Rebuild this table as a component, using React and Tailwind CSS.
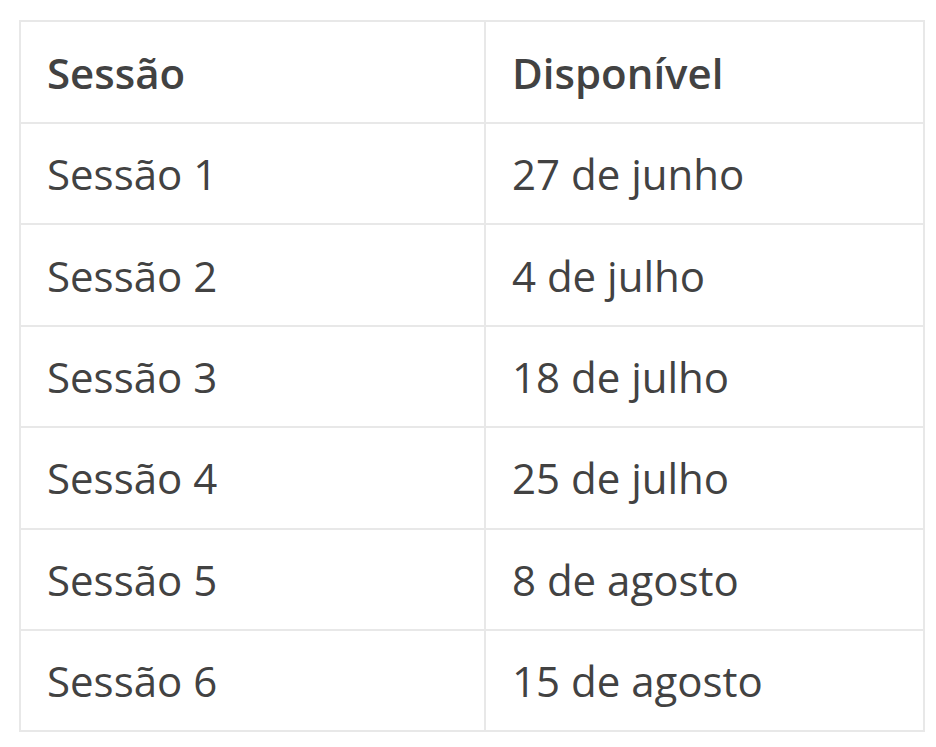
import React from "react";

const rows = [
  ["Sessão 1", "27 de junho"],
  ["Sessão 2", "4 de julho"],
  ["Sessão 3", "18 de julho"],
  ["Sessão 4", "25 de julho"],
  ["Sessão 5", "8 de agosto"],
  ["Sessão 6", "15 de agosto"],
];

const App = () => {
  return (
    <div
      className="min-h-screen bg-white pl-[19px] pt-[20px] text-[#424242]"
      style={{ fontFamily: '"Open Sans", "Liberation Sans", sans-serif' }}
    >
      <table className="w-[906px] table-fixed border-collapse border-2 border-[#e8e8e8] text-[42px]">
        <colgroup>
          <col className="w-[465px]" />
          <col />
        </colgroup>
        <thead>
          <tr className="h-[102px]">
            <th className="border-2 border-[#e8e8e8] px-[26px] text-left font-semibold">Sessão</th>
            <th className="border-2 border-[#e8e8e8] px-[26px] text-left font-semibold">Disponível</th>
          </tr>
        </thead>
        <tbody>
          {rows.map(([session, date]) => (
            <tr key={session} className="h-[101.4px]">
              <td className="border-2 border-[#e8e8e8] px-[26px]">{session}</td>
              <td className="border-2 border-[#e8e8e8] px-[26px]">{date}</td>
            </tr>
          ))}
        </tbody>
      </table>
    </div>
  );
};

export default App;
